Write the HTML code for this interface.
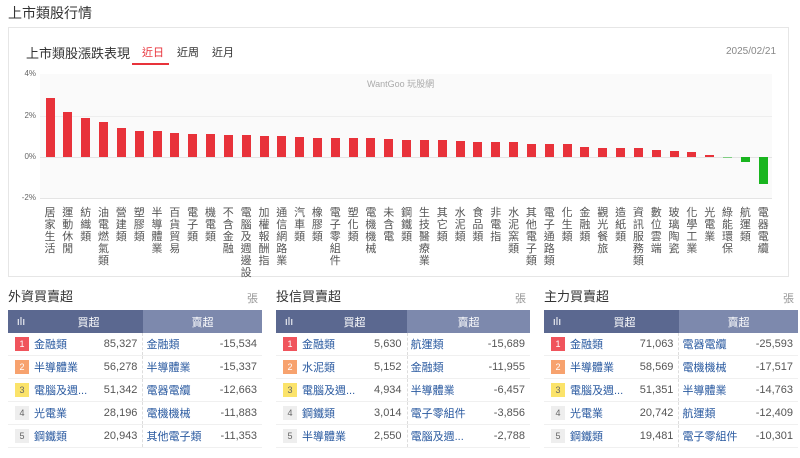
<!DOCTYPE html><html><head><meta charset="utf-8"><style>
body{margin:0;width:800px;height:458px;background:#fff;font-family:"Liberation Sans","Noto Sans CJK TC",sans-serif;position:relative;overflow:hidden;color:#333}
.a{position:absolute}
.box{left:8px;top:27px;width:781px;height:250px;border:1px solid #e6e6e6;box-sizing:border-box}
.plot{left:40px;top:74px;width:732px;height:124px;background:#fafafa}
.g{position:absolute;left:40px;width:732px;height:1px;background:#eee}
.yl{position:absolute;left:14px;width:22px;text-align:right;font-size:8px;color:#666}
.b{position:absolute;width:9px;background:#e8323a}
.gr{background:#19b51f}
.l{position:absolute;top:207px;width:12px;font-size:11px;line-height:12px;color:#555;word-break:break-all;text-align:center}
.p{position:absolute;top:287px;width:254px}
.p h3{margin:0;font-size:13px;font-weight:normal;color:#333;height:23px;line-height:20px}
.p .z{position:absolute;right:4px;top:3px;font-size:11px;color:#999}
table{border-collapse:collapse;width:254px;font-size:11px}
th{height:23px;color:#fff;font-weight:normal;font-size:11px;padding:0}
td{height:22px;border-bottom:1px solid #f0f0f0;padding:0}
.r{width:14px;height:14px;display:inline-block;font-size:9px;line-height:14px;text-align:center;color:#666;background:#eee;margin-left:7px;vertical-align:middle}
.n{color:#2a5aa0}
.v{text-align:right;color:#555;padding-right:5px}
.dv{border-left:1px dashed #ddd}
</style></head><body>
<div class="a" style="left:8px;top:3px;font-size:14px;color:#333">上市類股行情</div>
<div class="a box"></div>
<div class="a" style="left:26px;top:43px;font-size:13px;color:#333">上市類股漲跌表現</div>
<div class="a" style="left:142px;top:44px;font-size:11px;color:#e8323a">近日</div>
<div class="a" style="left:132px;top:63px;width:37px;height:2px;background:#e8323a"></div>
<div class="a" style="left:177px;top:44px;font-size:11px;color:#333">近周</div>
<div class="a" style="left:212px;top:44px;font-size:11px;color:#333">近月</div>
<div class="a" style="left:726px;top:46px;font-size:10px;color:#888">2025/02/21</div>
<div class="a plot"></div>
<div class="g" style="top:116px"></div><div class="g" style="top:157px;background:#e4e4e4"></div><div class="g" style="top:198px;background:#e4e4e4"></div>
<div class="yl" style="top:69px">4%</div><div class="yl" style="top:111px">2%</div><div class="yl" style="top:152px">0%</div><div class="yl" style="top:193px">-2%</div>
<div class="a" style="left:367px;top:77px;font-size:9px;color:#aaa">WantGoo 玩股網</div>
<div class="b" style="left:45.5px;top:98px;height:59px"></div>
<div class="b" style="left:63.3px;top:112px;height:45px"></div>
<div class="b" style="left:81.2px;top:118px;height:39px"></div>
<div class="b" style="left:99px;top:122px;height:35px"></div>
<div class="b" style="left:116.8px;top:128px;height:29px"></div>
<div class="b" style="left:134.7px;top:131px;height:26px"></div>
<div class="b" style="left:152.5px;top:131px;height:26px"></div>
<div class="b" style="left:170.3px;top:133px;height:24px"></div>
<div class="b" style="left:188.1px;top:134px;height:23px"></div>
<div class="b" style="left:206px;top:134px;height:23px"></div>
<div class="b" style="left:223.8px;top:135px;height:22px"></div>
<div class="b" style="left:241.6px;top:135px;height:22px"></div>
<div class="b" style="left:259.5px;top:136px;height:21px"></div>
<div class="b" style="left:277.3px;top:136px;height:21px"></div>
<div class="b" style="left:295.1px;top:137px;height:20px"></div>
<div class="b" style="left:312.9px;top:138px;height:19px"></div>
<div class="b" style="left:330.8px;top:138px;height:19px"></div>
<div class="b" style="left:348.6px;top:138px;height:19px"></div>
<div class="b" style="left:366.4px;top:138px;height:19px"></div>
<div class="b" style="left:384.3px;top:139px;height:18px"></div>
<div class="b" style="left:402.1px;top:140px;height:17px"></div>
<div class="b" style="left:419.9px;top:140px;height:17px"></div>
<div class="b" style="left:437.8px;top:140px;height:17px"></div>
<div class="b" style="left:455.6px;top:141px;height:16px"></div>
<div class="b" style="left:473.4px;top:142px;height:15px"></div>
<div class="b" style="left:491.3px;top:142px;height:15px"></div>
<div class="b" style="left:509.1px;top:142px;height:15px"></div>
<div class="b" style="left:526.9px;top:144px;height:13px"></div>
<div class="b" style="left:544.7px;top:144px;height:13px"></div>
<div class="b" style="left:562.6px;top:144px;height:13px"></div>
<div class="b" style="left:580.4px;top:147px;height:10px"></div>
<div class="b" style="left:598.2px;top:148px;height:9px"></div>
<div class="b" style="left:616.1px;top:148px;height:9px"></div>
<div class="b" style="left:633.9px;top:148px;height:9px"></div>
<div class="b" style="left:651.7px;top:150px;height:7px"></div>
<div class="b" style="left:669.5px;top:151px;height:6px"></div>
<div class="b" style="left:687.4px;top:152px;height:5px"></div>
<div class="b" style="left:705.2px;top:155px;height:2px"></div>
<div class="b gr" style="left:723px;top:157px;height:1px;opacity:.5"></div>
<div class="b gr" style="left:740.9px;top:157px;height:5px"></div>
<div class="b gr" style="left:758.7px;top:157px;height:27px"></div>
<div class="l" style="left:44px">居家生活</div>
<div class="l" style="left:61.8px">運動休閒</div>
<div class="l" style="left:79.7px">紡織類</div>
<div class="l" style="left:97.5px">油電燃氣類</div>
<div class="l" style="left:115.3px">營建類</div>
<div class="l" style="left:133.2px">塑膠類</div>
<div class="l" style="left:151px">半導體業</div>
<div class="l" style="left:168.8px">百貨貿易</div>
<div class="l" style="left:186.6px">電子類</div>
<div class="l" style="left:204.5px">機電類</div>
<div class="l" style="left:222.3px">不含金融</div>
<div class="l" style="left:240.1px">電腦及週邊設</div>
<div class="l" style="left:258px">加權報酬指</div>
<div class="l" style="left:275.8px">通信網路業</div>
<div class="l" style="left:293.6px">汽車類</div>
<div class="l" style="left:311.4px">橡膠類</div>
<div class="l" style="left:329.3px">電子零組件</div>
<div class="l" style="left:347.1px">塑化類</div>
<div class="l" style="left:364.9px">電機機械</div>
<div class="l" style="left:382.8px">未含電</div>
<div class="l" style="left:400.6px">鋼鐵類</div>
<div class="l" style="left:418.4px">生技醫療業</div>
<div class="l" style="left:436.3px">其它類</div>
<div class="l" style="left:454.1px">水泥類</div>
<div class="l" style="left:471.9px">食品類</div>
<div class="l" style="left:489.8px">非電指</div>
<div class="l" style="left:507.6px">水泥窯類</div>
<div class="l" style="left:525.4px">其他電子類</div>
<div class="l" style="left:543.2px">電子通路類</div>
<div class="l" style="left:561.1px">化生類</div>
<div class="l" style="left:578.9px">金融類</div>
<div class="l" style="left:596.7px">觀光餐旅</div>
<div class="l" style="left:614.6px">造紙類</div>
<div class="l" style="left:632.4px">資訊服務類</div>
<div class="l" style="left:650.2px">數位雲端</div>
<div class="l" style="left:668px">玻璃陶瓷</div>
<div class="l" style="left:685.9px">化學工業</div>
<div class="l" style="left:703.7px">光電業</div>
<div class="l" style="left:721.5px">綠能環保</div>
<div class="l" style="left:739.4px">航運類</div>
<div class="l" style="left:757.2px">電器電纜</div>

<div class="p" style="left:8px"><h3>外資買賣超</h3><span class="z">張</span>
<table><tr><th style="background:#5b6890;width:26px">ılı</th><th style="background:#5b6890" colspan="2">買超</th><th style="background:#7d89ad" colspan="2">賣超</th></tr>
<tr><td><span class="r" style="background:#f0545c;color:#fff">1</span></td><td class="n">金融類</td><td class="v">85,327</td><td class="n dv">&nbsp;金融類</td><td class="v">-15,534</td></tr>
<tr><td><span class="r" style="background:#f7a26e;color:#fff">2</span></td><td class="n">半導體業</td><td class="v">56,278</td><td class="n dv">&nbsp;半導體業</td><td class="v">-15,337</td></tr>
<tr><td><span class="r" style="background:#fbe36a">3</span></td><td class="n">電腦及週...</td><td class="v">51,342</td><td class="n dv">&nbsp;電器電纜</td><td class="v">-12,663</td></tr>
<tr><td><span class="r">4</span></td><td class="n">光電業</td><td class="v">28,196</td><td class="n dv">&nbsp;電機機械</td><td class="v">-11,883</td></tr>
<tr><td><span class="r">5</span></td><td class="n">鋼鐵類</td><td class="v">20,943</td><td class="n dv">&nbsp;其他電子類</td><td class="v">-11,353</td></tr></table></div>

<div class="p" style="left:276px"><h3>投信買賣超</h3><span class="z">張</span>
<table><tr><th style="background:#5b6890;width:26px">ılı</th><th style="background:#5b6890" colspan="2">買超</th><th style="background:#7d89ad" colspan="2">賣超</th></tr>
<tr><td><span class="r" style="background:#f0545c;color:#fff">1</span></td><td class="n">金融類</td><td class="v">5,630</td><td class="n dv">&nbsp;航運類</td><td class="v">-15,689</td></tr>
<tr><td><span class="r" style="background:#f7a26e;color:#fff">2</span></td><td class="n">水泥類</td><td class="v">5,152</td><td class="n dv">&nbsp;金融類</td><td class="v">-11,955</td></tr>
<tr><td><span class="r" style="background:#fbe36a">3</span></td><td class="n">電腦及週...</td><td class="v">4,934</td><td class="n dv">&nbsp;半導體業</td><td class="v">-6,457</td></tr>
<tr><td><span class="r">4</span></td><td class="n">鋼鐵類</td><td class="v">3,014</td><td class="n dv">&nbsp;電子零組件</td><td class="v">-3,856</td></tr>
<tr><td><span class="r">5</span></td><td class="n">半導體業</td><td class="v">2,550</td><td class="n dv">&nbsp;電腦及週...</td><td class="v">-2,788</td></tr></table></div>

<div class="p" style="left:544px"><h3>主力買賣超</h3><span class="z">張</span>
<table><tr><th style="background:#5b6890;width:26px">ılı</th><th style="background:#5b6890" colspan="2">買超</th><th style="background:#7d89ad" colspan="2">賣超</th></tr>
<tr><td><span class="r" style="background:#f0545c;color:#fff">1</span></td><td class="n">金融類</td><td class="v">71,063</td><td class="n dv">&nbsp;電器電纜</td><td class="v">-25,593</td></tr>
<tr><td><span class="r" style="background:#f7a26e;color:#fff">2</span></td><td class="n">半導體業</td><td class="v">58,569</td><td class="n dv">&nbsp;電機機械</td><td class="v">-17,517</td></tr>
<tr><td><span class="r" style="background:#fbe36a">3</span></td><td class="n">電腦及週...</td><td class="v">51,351</td><td class="n dv">&nbsp;半導體業</td><td class="v">-14,763</td></tr>
<tr><td><span class="r">4</span></td><td class="n">光電業</td><td class="v">20,742</td><td class="n dv">&nbsp;航運類</td><td class="v">-12,409</td></tr>
<tr><td><span class="r">5</span></td><td class="n">鋼鐵類</td><td class="v">19,481</td><td class="n dv">&nbsp;電子零組件</td><td class="v">-10,301</td></tr></table></div>
</body></html>
